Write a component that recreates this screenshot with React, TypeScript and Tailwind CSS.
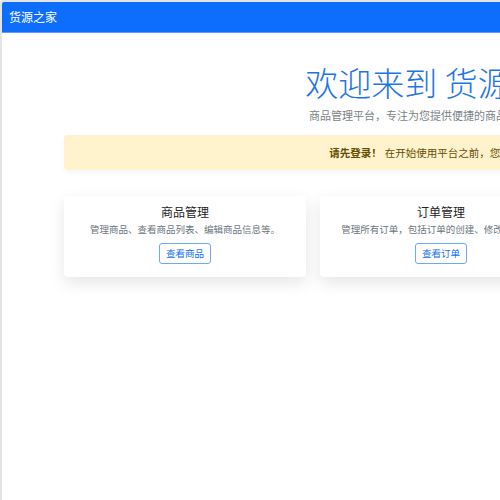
import React from "react";

const cards = [
  { title: "商品管理", desc: "管理商品、查看商品列表、编辑商品信息等。", btn: "查看商品" },
  { title: "订单管理", desc: "管理所有订单，包括订单的创建、修改和查询。", btn: "查看订单" },
  { title: "用户管理", desc: "管理用户账号、权限设置以及个人信息。", btn: "查看用户" },
];

export default function App() {
  return (
    <div
      className="w-[500px] h-[500px] overflow-hidden bg-white"
      style={{ fontFamily: '"Noto Sans CJK SC", "Noto Sans", sans-serif' }}
    >
      <div className="h-[500px] w-[880px] border-l-2 border-t-2 border-[#e4e4e4] rounded-tl-[4px] bg-white overflow-hidden">
        <div className="h-[31px] bg-[#0d6efd] flex items-center pl-[7px] border-b border-[#5a9bfd]">
          <span className="text-white text-[12px] leading-none">货源之家</span>
        </div>
        <div className="px-[62px] pt-[30px]">
          <div className="flex flex-col items-center">
            <h1 className="text-[33px] leading-[39px] font-light text-[#1f74e6]">欢迎来到 货源之家</h1>
            <p className="mt-[6px] text-[11px] leading-[14px] text-[#7a7f85]">
              商品管理平台，专注为您提供便捷的商品和订单管理。
            </p>
          </div>
          <div className="mt-[13px] h-[35px] rounded-[4px] bg-[#fff3cd] flex items-center justify-center text-[10.5px] text-[#664d03] shadow-[0_3px_6px_rgba(0,0,0,0.04)]">
            <span className="font-bold">请先登录！</span>
            <span className="ml-[3px]">在开始使用平台之前，您需要登录。</span>
          </div>
          <div className="mt-[26px] grid grid-cols-3 gap-[14px]">
            {cards.map((c) => (
              <div
                key={c.title}
                className="h-[81px] rounded-[4px] bg-white shadow-[0_6px_16px_rgba(0,0,0,0.1)] flex flex-col items-center pt-[8px]"
              >
                <div className="text-[12px] leading-[16px] text-[#222]">{c.title}</div>
                <div className="mt-[3px] text-[9.5px] leading-[13px] text-[#6c757d]">{c.desc}</div>
                <button className="mt-[7px] h-[21px] px-[6px] rounded-[3px] border border-[#6ea8fe] text-[9.5px] text-[#0d6efd] bg-white leading-none">
                  {c.btn}
                </button>
              </div>
            ))}
          </div>
        </div>
      </div>
    </div>
  );
}
